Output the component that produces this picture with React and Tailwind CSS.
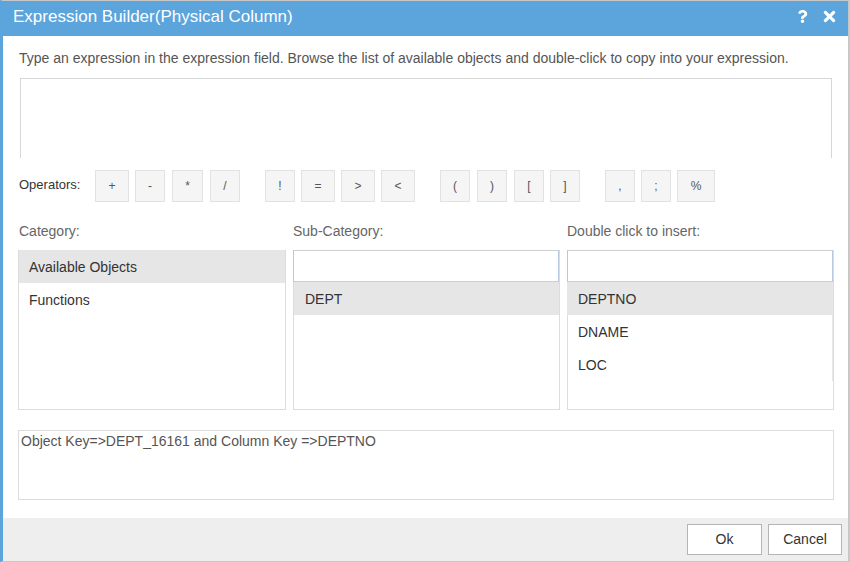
import React from "react";
import { FaQuestion, FaTimes } from "react-icons/fa";

const ops = [
  { t: "+", c: "ml-0 w-[34px]" },
  { t: "-", c: "ml-[6px] w-[30px]" },
  { t: "*", c: "ml-[7px] w-[31px]" },
  { t: "/", c: "ml-[7px] w-[30px]" },
  { t: "!", c: "ml-[25px] w-[30px]" },
  { t: "=", c: "ml-[6px] w-[34px]" },
  { t: ">", c: "ml-[6px] w-[34px]" },
  { t: "<", c: "ml-[6px] w-[34px]" },
  { t: "(", c: "ml-[25px] w-[30px]" },
  { t: ")", c: "ml-[7px] w-[30px]" },
  { t: "[", c: "ml-[7px] w-[30px]" },
  { t: "]", c: "ml-[6px] w-[30px]" },
  { t: ",", c: "ml-[25px] w-[30px]" },
  { t: ";", c: "ml-[6px] w-[30px]" },
  { t: "%", c: "ml-[6px] w-[38px]" },
];

function Row({ label, active, pad = "pl-[10px]" }) {
  return (
    <div
      className={
        "h-[33px] flex items-center pt-px text-[14px] text-[#333] " +
        pad +
        " " +
        (active ? "bg-[#e6e6e6]" : "")
      }
    >
      {label}
    </div>
  );
}

export default function App() {
  return (
    <div
      className="w-[850px] h-[562px] flex flex-col border-t border-t-[#c8c8c8] border-b border-b-[#c8c8c8] border-l-[3px] border-l-[#5ba4dc] border-r-2 border-r-[#c8c8c8] bg-white"
      style={{ fontFamily: '"Liberation Sans", Arial, sans-serif' }}
    >
      {/* Header */}
      <div className="h-[35px] shrink-0 bg-[#5ba4dc] flex items-center pl-[10px] pr-[10px]">
        <div className="text-white text-[17px] leading-[20px] -mt-[3px]">
          Expression Builder(Physical Column)
        </div>
        <div className="ml-auto flex items-center -mt-[4px] text-white">
          <FaQuestion size={13} />
          <FaTimes size={17} className="ml-[12px]" />
        </div>
      </div>

      {/* Body */}
      <div className="flex-1 pl-[15px] pr-[14px]">
        <div className="mt-[14px] pl-[1px] text-[14px] leading-[16px] text-[#555]">
          Type an expression in the expression field. Browse the list of available objects and double-click to copy into your expression.
        </div>
        <div className="mt-[12px] ml-[2px] w-[812px] h-[80px] border border-b-0 border-[#d6d6d6]" />

        {/* Operators */}
        <div className="mt-[12px] flex items-center h-[32px]">
          <div className="w-[77px] pl-[1px] -mt-[2px] text-[13px] text-[#333]">Operators:</div>
          {ops.map((o, i) => (
            <div
              key={i}
              className={
                "h-[32px] flex items-center justify-center bg-[#f5f5f5] border border-[#e2e2e2] text-[12px] text-[#555] " +
                o.c
              }
            >
              {o.t}
            </div>
          ))}
        </div>

        {/* Lists */}
        <div className="mt-[21px] flex">
          <div className="w-[268px] flex flex-col">
            <div className="pl-[1px] text-[14px] leading-[16px] text-[#666]">Category:</div>
            <div className="mt-[11px] h-[160px] border border-[#dcdcdc] border-t-0">
              <Row label="Available Objects" active />
              <Row label="Functions" />
            </div>
          </div>
          <div className="ml-[7px] w-[267px] flex flex-col">
            <div className="text-[14px] leading-[16px] text-[#666]">Sub-Category:</div>
            <div className="mt-[11px] h-[160px] border border-t-0 border-[#dcdcdc]">
              <div className="h-[32px] -ml-px w-[266px] border border-[#cfcfcf] border-l-[#b8c8e2] border-r-[#b8c8e2]" />
              <div>
                <Row label="DEPT" active pad="pl-[11px]" />
              </div>
            </div>
          </div>
          <div className="ml-[7px] w-[267px] flex flex-col">
            <div className="text-[14px] leading-[16px] text-[#666]">Double click to insert:</div>
            <div className="mt-[11px] h-[160px] border border-t-0 border-[#dcdcdc]">
              <div className="h-[32px] -ml-px w-[266px] border border-[#cfcfcf] border-l-[#b8c8e2] border-r-[#b8c8e2]" />
              <div className="-ml-px w-[266px] border-r border-r-[#e8e8e8]">
                <Row label="DEPTNO" active pad="pl-[11px]" />
                <Row label="DNAME" pad="pl-[11px]" />
                <Row label="LOC" pad="pl-[11px]" />
              </div>
            </div>
          </div>
        </div>

        {/* Status */}
        <div className="mt-[20px] w-[816px] h-[70px] border border-[#dcdcdc] px-[2px] pt-[2px] text-[14px] leading-[17px] text-[#555]">
          Object Key=&gt;DEPT_16161 and Column Key =&gt;DEPTNO
        </div>
      </div>

      {/* Footer */}
      <div className="h-[43px] shrink-0 bg-[#eeeeee] flex items-center justify-end pr-[6px]">
        <button className="w-[75px] h-[31px] bg-white border border-[#b4b4b4] text-[14px] text-[#333]">
          Ok
        </button>
        <button className="ml-[6px] w-[74px] h-[31px] bg-white border border-[#b4b4b4] text-[14px] text-[#333]">
          Cancel
        </button>
      </div>
    </div>
  );
}
